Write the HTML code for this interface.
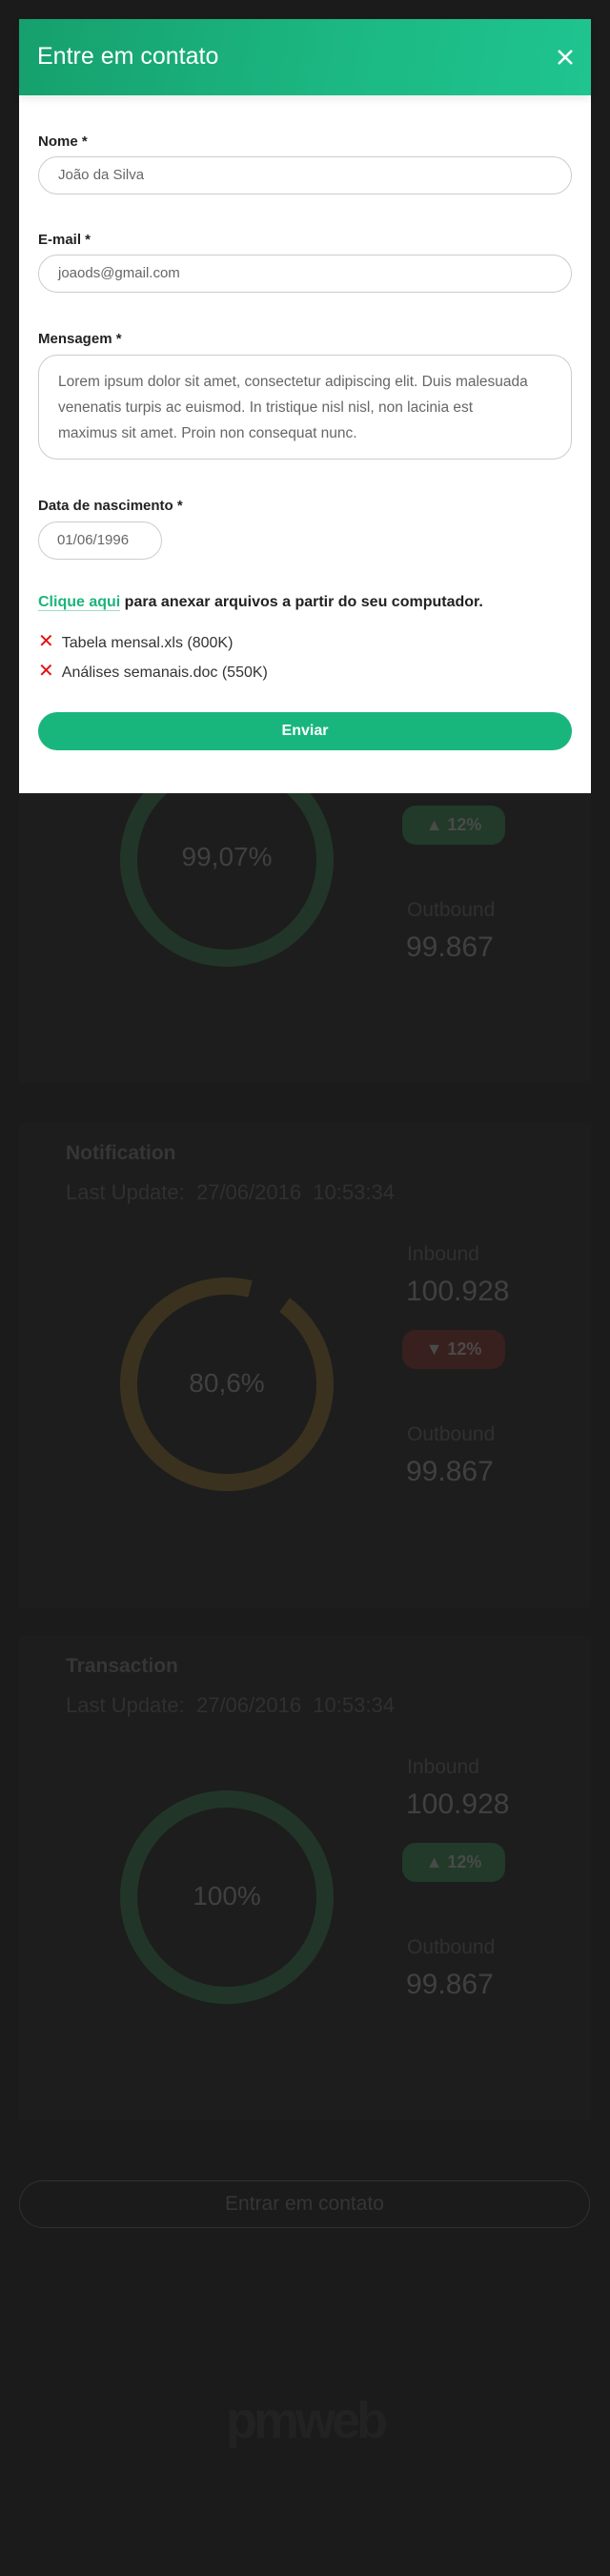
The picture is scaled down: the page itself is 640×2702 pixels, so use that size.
<!DOCTYPE html>
<html><head><meta charset="utf-8"><style>
*{box-sizing:border-box;margin:0;padding:0}
body{width:640px;height:2702px;background:#1b1b1b;font-family:"Liberation Sans",sans-serif;position:relative;overflow:hidden}
.card{position:absolute;left:20px;width:600px;height:508px;background:#1d1d1d}
.card .t{position:absolute;left:49px;top:20px;font-size:21px;font-weight:bold;color:#363636}
.card .u{position:absolute;left:49px;top:60px;font-size:22px;color:#303030}
.card svg{position:absolute;left:98px;top:162px}
.card .pct{position:absolute;left:98px;top:257px;width:240px;text-align:center;font-size:28px;color:#404040}
.card .l1{position:absolute;left:407px;top:126px;font-size:21px;color:#303030}
.card .v1{position:absolute;left:406px;top:160px;font-size:30px;color:#404040}
.card .pill{position:absolute;left:402px;top:217px;width:108px;height:41px;border-radius:14px;color:#4a4a4a;font-weight:bold;font-size:18px;line-height:41px;text-align:center}
.card .l2{position:absolute;left:407px;top:315px;font-size:21px;color:#303030}
.card .v2{position:absolute;left:406px;top:349px;font-size:30px;color:#404040}
.modal{position:absolute;left:20px;top:20px;width:600px;height:812px;background:#fff}
.hd{height:80px;background:linear-gradient(100deg,#16a06d 0%,#1cb984 60%,#1fc48f 100%);position:relative;box-shadow:0 4px 8px rgba(0,0,0,.08)}
.hd span{position:absolute;left:19px;top:25px;font-size:25px;color:#fff}
.lab{position:absolute;left:20px;font-size:15px;font-weight:bold;color:#222}
.inp{position:absolute;left:20px;width:560px;height:40px;border:1px solid #ccc;border-radius:20px;font-size:15px;color:#666;padding-left:20px;line-height:38px}
</style></head><body>

<div class="card" style="top:628px">
<div class="t">Processing</div><div class="u">Last Update:&nbsp; 27/06/2016&nbsp; 10:53:34</div>
<svg width="240" height="240"><circle cx="120" cy="112" r="103" fill="none" stroke="#213628" stroke-width="18"/></svg>
<div class="pct" style="top:255px">99,07%</div>
<div class="pill" style="background:#223a29">▲ 12%</div>
<div class="l2">Outbound</div><div class="v2">99.867</div>
</div>

<div class="card" style="top:1178px">
<div class="t">Notification</div><div class="u">Last Update:&nbsp; 27/06/2016&nbsp; 10:53:34</div>
<svg width="240" height="240"><circle cx="120" cy="112" r="103" fill="none" stroke="#3a321f" stroke-width="18" stroke-dasharray="607 40" transform="rotate(-54 120 112)"/></svg>
<div class="pct">80,6%</div>
<div class="l1">Inbound</div><div class="v1">100.928</div>
<div class="pill" style="background:#38201e">▼ 12%</div>
<div class="l2">Outbound</div><div class="v2">99.867</div>
</div>

<div class="card" style="top:1716px">
<div class="t">Transaction</div><div class="u">Last Update:&nbsp; 27/06/2016&nbsp; 10:53:34</div>
<svg width="240" height="240"><circle cx="120" cy="112" r="103" fill="none" stroke="#213628" stroke-width="18"/></svg>
<div class="pct">100%</div>
<div class="l1">Inbound</div><div class="v1">100.928</div>
<div class="pill" style="background:#223a29">▲ 12%</div>
<div class="l2">Outbound</div><div class="v2">99.867</div>
</div>

<div style="position:absolute;left:20px;top:2287px;width:599px;height:50px;border:1px solid #303030;border-radius:25px;text-align:center;line-height:48px;font-size:21px;color:#353535">Entrar em contato</div>
<div style="position:absolute;left:0;top:2508px;width:640px;text-align:center;font-size:54px;font-weight:bold;letter-spacing:-4px;color:#222">pmweb</div>

<div class="modal">
<div class="hd"><span>Entre em contato</span>
<svg style="position:absolute;left:564px;top:31px" width="18" height="18"><path d="M2 2L16 16M16 2L2 16" stroke="#fff" stroke-width="2.5"/></svg></div>
<div class="lab" style="top:120px">Nome *</div>
<div class="inp" style="top:144px">João da Silva</div>
<div class="lab" style="top:223px">E-mail *</div>
<div class="inp" style="top:247px">joaods@gmail.com</div>
<div class="lab" style="top:327px">Mensagem *</div>
<div class="inp" style="top:352px;height:110px;border-radius:20px;line-height:27px;padding-top:14px;padding-right:40px;font-size:15.5px">Lorem ipsum dolor sit amet, consectetur adipiscing elit. Duis malesuada venenatis turpis ac euismod. In tristique nisl nisl, non lacinia est maximus sit amet. Proin non consequat nunc.</div>
<div class="lab" style="top:502px">Data de nascimento *</div>
<div class="inp" style="top:527px;width:130px;padding-left:19px">01/06/1996</div>
<div style="position:absolute;left:20px;top:603px;font-size:16px;font-weight:bold;color:#222"><span style="color:#1cb47c;border-bottom:1px solid #9fdcc5">Clique aqui</span> para anexar arquivos a partir do seu computador.</div>
<div style="position:absolute;left:20px;top:640px;font-size:16px;color:#333"><span style="color:#e41010;font-size:20px;margin-right:8px">✕</span>Tabela mensal.xls (800K)</div>
<div style="position:absolute;left:20px;top:671px;font-size:16px;color:#333"><span style="color:#e41010;font-size:20px;margin-right:8px">✕</span>Análises semanais.doc (550K)</div>
<div style="position:absolute;left:20px;top:727px;width:560px;height:40px;border-radius:20px;background:#18b67d;color:#fff;font-weight:bold;font-size:16px;text-align:center;line-height:40px">Enviar</div>
</div>
</body></html>
